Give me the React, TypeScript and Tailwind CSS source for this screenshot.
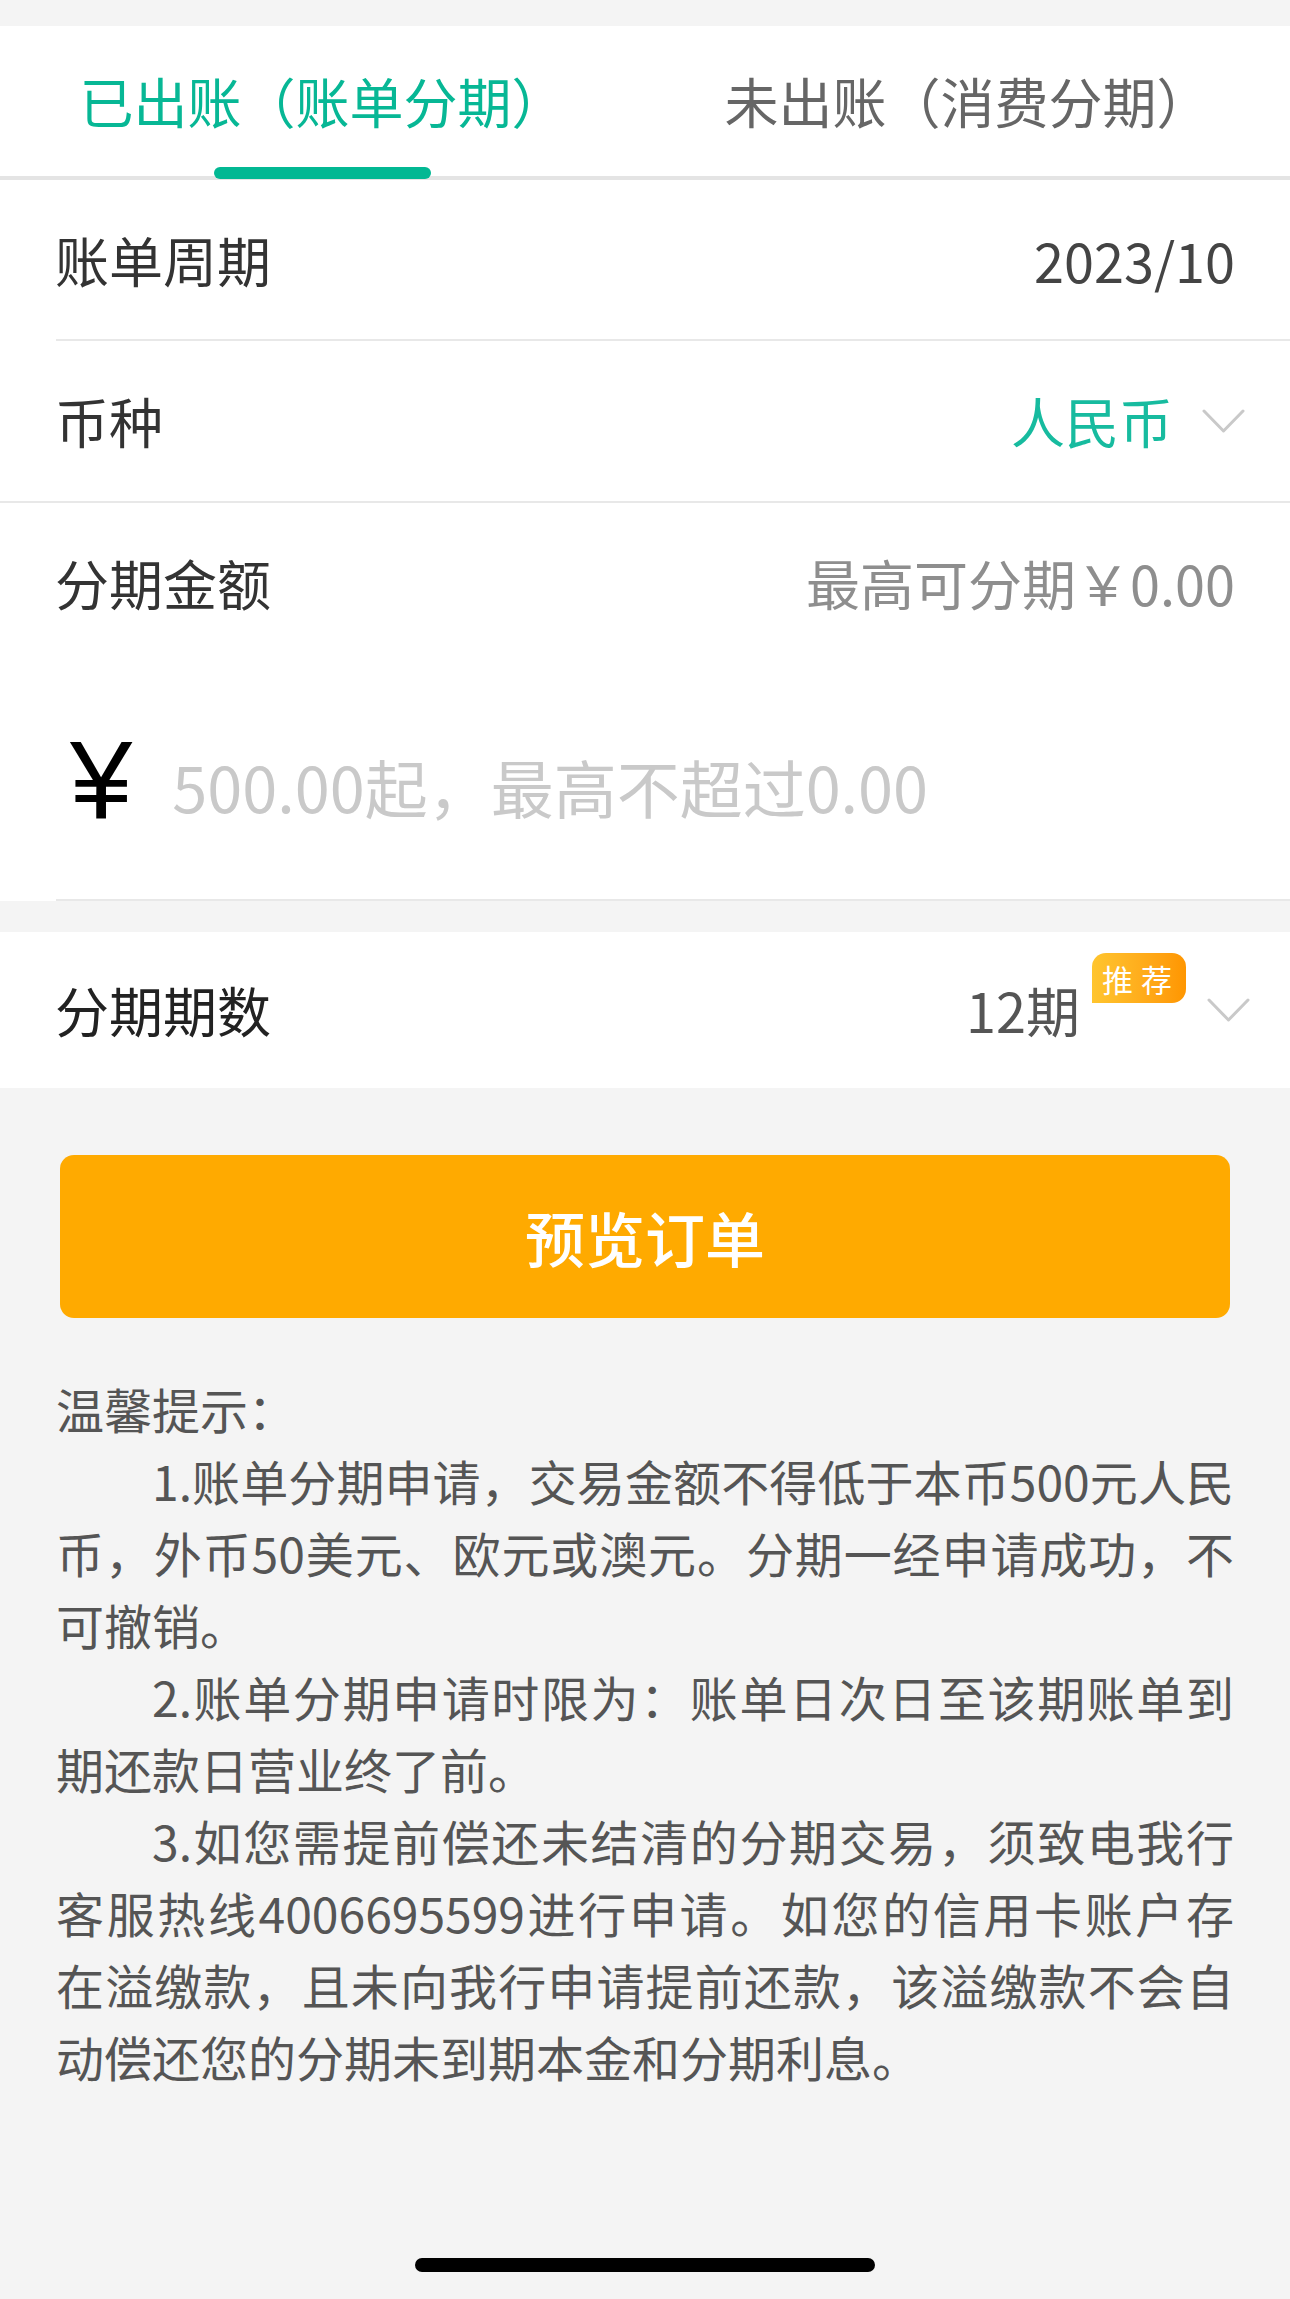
import React from 'react';

const TEAL = '#07b795';

function Chevron() {
  return (
    <svg width="43" height="25" viewBox="0 0 43 25" fill="none">
      <polyline points="2,2 21.5,22 41,2" stroke="#c9c9c9" strokeWidth="3" strokeLinejoin="round" strokeLinecap="round" />
    </svg>
  );
}

function Divider({ inset = false }: { inset?: boolean }) {
  return (
    <div className="bg-white">
      <div className={`h-[2px] bg-[#e8e8e8] ${inset ? 'ml-[56px]' : ''}`} />
    </div>
  );
}

const tips: { lines: string[] }[] = [
  {
    lines: ['1.账单分期申请，交易金额不得低于本币500元人民', '币，外币50美元、欧元或澳元。分期一经申请成功，不', '可撤销。'],
  },
  {
    lines: ['2.账单分期申请时限为：账单日次日至该期账单到', '期还款日营业终了前。'],
  },
  {
    lines: [
      '3.如您需提前偿还未结清的分期交易，须致电我行',
      '客服热线4006695599进行申请。如您的信用卡账户存',
      '在溢缴款，且未向我行申请提前还款，该溢缴款不会自',
      '动偿还您的分期未到期本金和分期利息。',
    ],
  },
];

export default function App() {
  return (
    <div className="flex min-h-[2299px] flex-col bg-[#f4f4f4] font-['Noto_Sans_CJK_SC','Noto_Sans',sans-serif]">
      <div className="h-[26px]" />

      {/* tabs */}
      <div className="flex h-[154px] border-b-[4px] border-[#e4e4e4] bg-white">
        <div className="relative flex flex-1 items-center justify-center">
          <span className="text-[54px] leading-none" style={{ color: TEAL }}>
            已出账（账单分期）
          </span>
          <div className="absolute left-[214px] top-[141px] h-[12px] w-[217px] rounded-full" style={{ background: '#02b893' }} />
        </div>
        <div className="flex flex-1 items-center justify-center">
          <span className="text-[54px] leading-none text-[#666666]">未出账（消费分期）</span>
        </div>
      </div>

      {/* bill period */}
      <div className="flex h-[159px] items-center justify-between bg-white px-[55px]">
        <span className="text-[54px] leading-none text-[#333333]">账单周期</span>
        <span className="text-[54px] leading-none text-[#444444]">2023/10</span>
      </div>
      <Divider inset />

      {/* currency */}
      <div className="flex h-[160px] items-center justify-between bg-white pl-[55px] pr-[45px]">
        <span className="text-[54px] leading-none text-[#333333]">币种</span>
        <div className="flex items-center gap-[29px]">
          <span className="text-[54px] leading-none text-[#17bb9f]">人民币</span>
          <Chevron />
        </div>
      </div>
      <Divider />

      {/* amount */}
      <div className="bg-white">
        <div className="flex h-[160px] items-center justify-between px-[55px]">
          <span className="text-[54px] leading-none text-[#333333]">分期金额</span>
          <span className="text-[54px] leading-none text-[#8e8e8e]">最高可分期￥0.00</span>
        </div>
        <div className="flex h-[236px] items-center pl-[70px] pr-[55px]">
          <span className="font-['Liberation_Sans',sans-serif] text-[112px] leading-none text-black">¥</span>
          <input
            className="ml-[40px] mt-[8px] flex-1 bg-transparent text-[63px] leading-none text-[#333] outline-none placeholder:text-[#c9c9c9]"
            placeholder="500.00起，最高不超过0.00"
          />
        </div>
      </div>
      <Divider inset />

      <div className="h-[31px]" />

      {/* periods */}
      <div className="flex h-[156px] items-center justify-between bg-white pl-[55px] pr-[40px]">
        <span className="text-[54px] leading-none text-[#222222]">分期期数</span>
        <div className="flex items-center">
          <span className="relative text-[54px] leading-none text-[#555555]">
            12期
            <span className="absolute left-full top-[-30px] ml-[12px] flex h-[50px] w-[94px] items-center justify-center rounded-tl-[14px] rounded-tr-[14px] rounded-br-[14px] bg-gradient-to-r from-[#ffc52e] to-[#ff9600] pl-[4px] text-[31px] leading-none tracking-[8px] text-white">
              推荐
            </span>
          </span>
          <div className="ml-[127px]">
            <Chevron />
          </div>
        </div>
      </div>

      {/* button */}
      <div className="mx-[60px] mt-[67px] flex h-[163px] items-center justify-center rounded-[14px] bg-[#ffaa00]">
        <span className="text-[60px] font-medium leading-none text-white">预览订单</span>
      </div>

      {/* tips */}
      <div className="mt-[54px] px-[56px] text-[48px] leading-[72px] text-[#555555]">
        <div>温馨提示：</div>
        {tips.map((tip, i) => (
          <div key={i}>
            {tip.lines.map((line, j) => (
              <div
                key={j}
                className={`${j === 0 ? 'pl-[96px]' : ''} ${j < tip.lines.length - 1 ? 'text-justify [text-align-last:justify]' : ''}`}
              >
                {line}
              </div>
            ))}
          </div>
        ))}
      </div>

      {/* home indicator */}
      <div className="mt-auto flex justify-center pb-[27px]">
        <div className="h-[14px] w-[460px] rounded-full bg-black" />
      </div>
    </div>
  );
}
